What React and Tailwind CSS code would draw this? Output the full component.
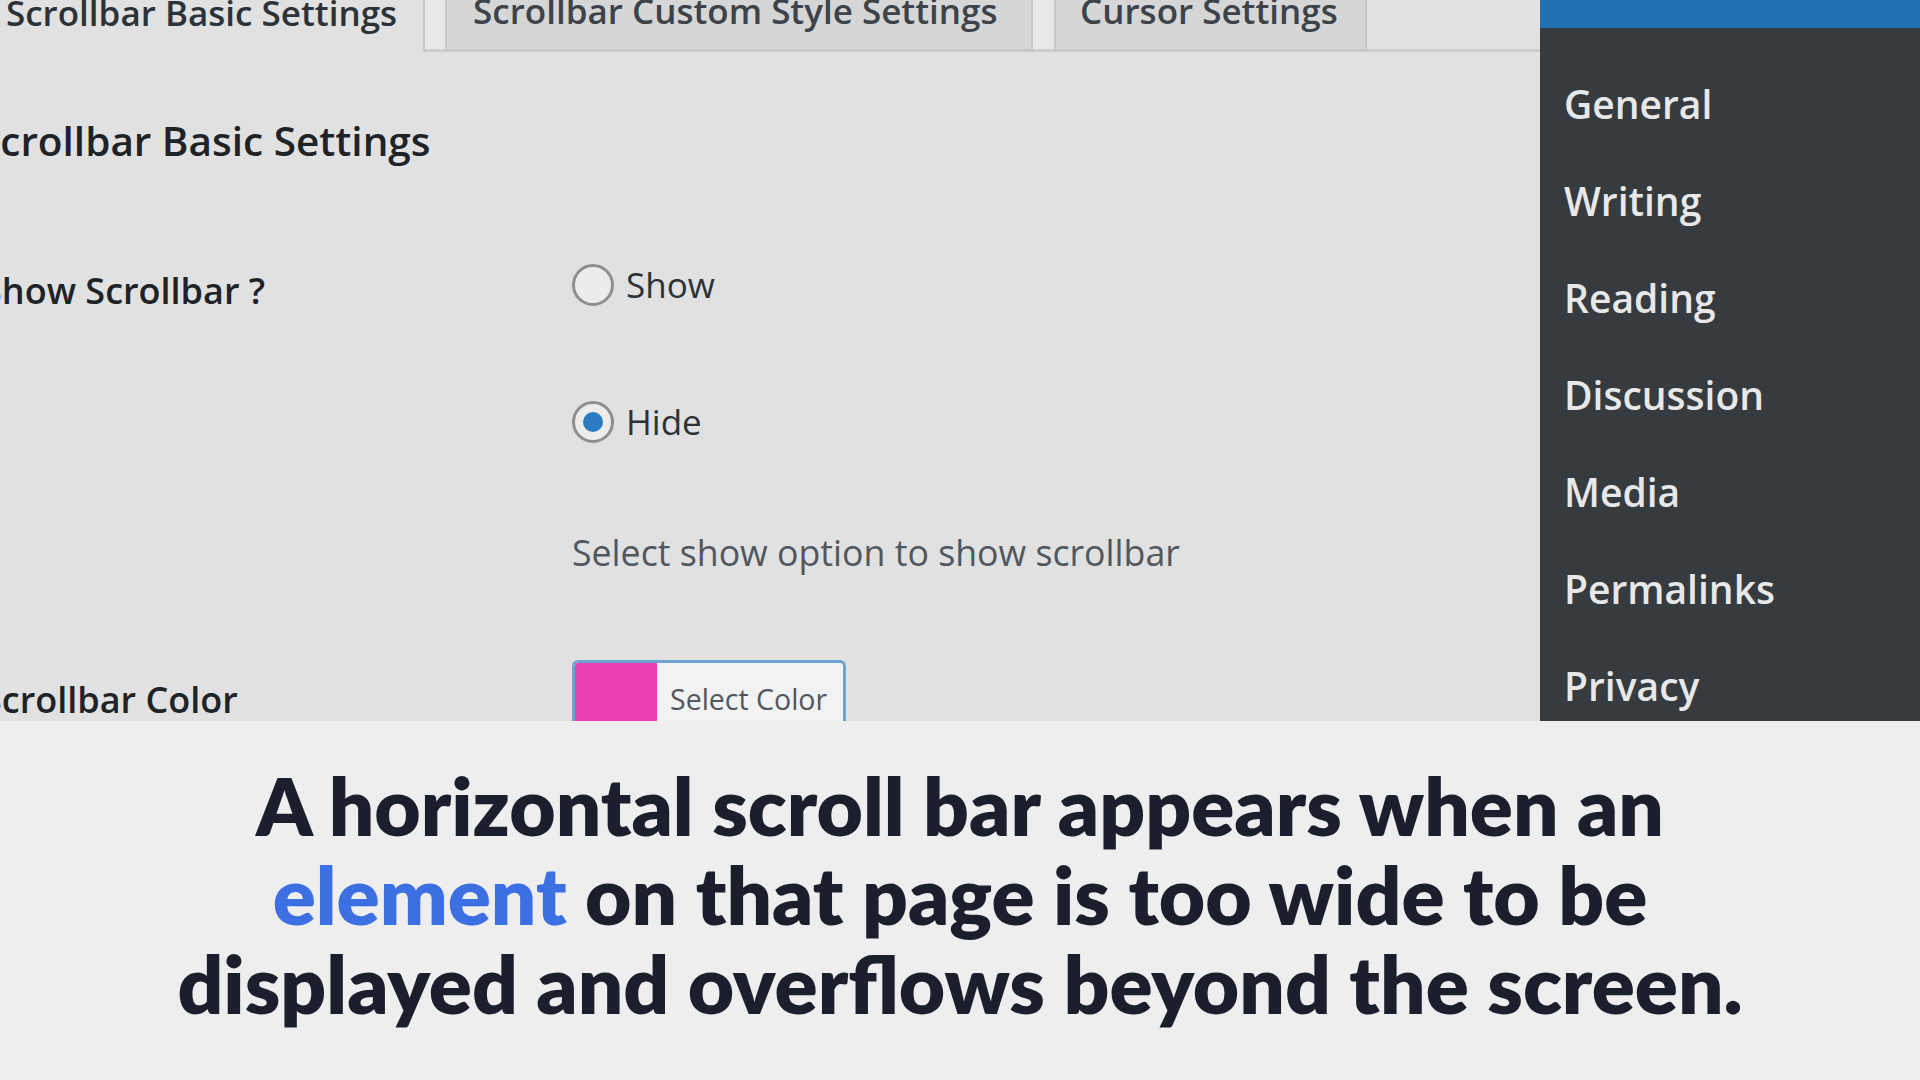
import React from 'react'

const menu = ['General', 'Writing', 'Reading', 'Discussion', 'Media', 'Permalinks', 'Privacy']

function Radio({ checked, label }) {
  return (
    <label className="flex h-[52px] items-center gap-[12px]">
      <span className="flex h-[42px] w-[42px] items-center justify-center rounded-full border-[3px] border-[#8e8e8e] bg-[#ececec]">
        {checked ? <span className="h-[20px] w-[20px] rounded-full bg-[#2b7bc3]" /> : null}
      </span>
      <span className="text-[35px] text-[#2c3338]">{label}</span>
    </label>
  )
}

export default function App() {
  return (
    <div className="flex h-[1080px] w-[1920px] flex-col overflow-hidden font-['Open_Sans','Noto_Sans',sans-serif]">
      <div className="flex h-[721px] shrink-0">
        <main className="w-[1540px] shrink-0 overflow-hidden bg-[#e1e1e1]">
          <div className="ml-[-18px]">
            {/* tabs */}
            <div className="mt-[-26px] flex h-[78px] items-stretch">
              <div className="flex items-center border-r-2 border-[#c9c9c9] bg-[#e1e1e1] pl-[24px] pr-[26px] text-[35px] font-semibold text-[#2c3338]">
                Scrollbar Basic Settings
              </div>
              <div className="w-[20px] border-b-[3px] border-[#cdcdcd] bg-[#e8e8e8]" />
              <div className="flex w-[588px] items-center border-x-2 border-b-[3px] border-[#c8c8c8] bg-[#d6d6d6] pl-[26px] text-[35px] font-semibold text-[#3c434a]">
                Scrollbar Custom Style Settings
              </div>
              <div className="w-[21px] border-b-[3px] border-[#cdcdcd] bg-[#e8e8e8]" />
              <div className="flex w-[313px] items-center border-x-2 border-b-[3px] border-[#c8c8c8] bg-[#d6d6d6] pl-[24px] text-[35px] font-semibold text-[#3c434a]">
                Cursor Settings
              </div>
              <div className="flex-1 border-b-[3px] border-[#cdcdcd]" />
            </div>

            <h2 className="mt-[63px] ml-[-4px] text-[40.5px] font-semibold leading-[52px] text-[#1d2327]">
              Scrollbar Basic Settings
            </h2>

            <div className="mt-[92px] grid grid-cols-[590px_1fr]">
              <div className="pt-[6px] text-[36px] font-semibold leading-[52px] text-[#1d2327]">Show Scrollbar ?</div>
              <div className="flex flex-col">
                <Radio label="Show" />
                <div className="mt-[85px]">
                  <Radio checked label="Hide" />
                </div>
                <p className="mt-[81px] text-[35.7px] leading-[46px] text-[#50575e]">Select show option to show scrollbar</p>
              </div>
            </div>

            <div className="mt-[85px] grid grid-cols-[590px_1fr] items-center">
              <div className="text-[36px] font-semibold leading-[52px] text-[#1d2327]">Scrollbar Color</div>
              <div>
                <button className="flex h-[80px] w-[274px] overflow-hidden rounded-[6px] border-[3px] border-[#6fa3d2] bg-[#f2f2f2] text-left">
                  <span className="w-[82px] shrink-0 bg-[#e93fb2]" />
                  <span className="flex items-center pb-[2px] pl-[13px] text-[28.5px] text-[#50575e]">Select Color</span>
                </button>
              </div>
            </div>
          </div>
        </main>

        <aside className="flex-1 bg-[#363b3f]">
          <div className="h-[28px] bg-[#2171b5]" />
          <ul className="pt-[28px]">
            {menu.map((m) => (
              <li key={m} className="flex h-[97px] items-center pl-[24px] text-[39px] font-semibold text-[#e8e8e8]">
                {m}
              </li>
            ))}
          </ul>
        </aside>
      </div>

      <div className="flex flex-1 items-center justify-center bg-[#eeeeee] pb-[12px]">
        <p className="text-center font-['Lato',sans-serif] text-[80px] font-extrabold leading-[89px] text-[#1b1f2d]">
          A horizontal scroll bar appears when an
          <br />
          <span className="text-[#3b6fe2]">element</span> on that page is too wide to be
          <br />
          displayed and overflows beyond the screen.
        </p>
      </div>
    </div>
  )
}
